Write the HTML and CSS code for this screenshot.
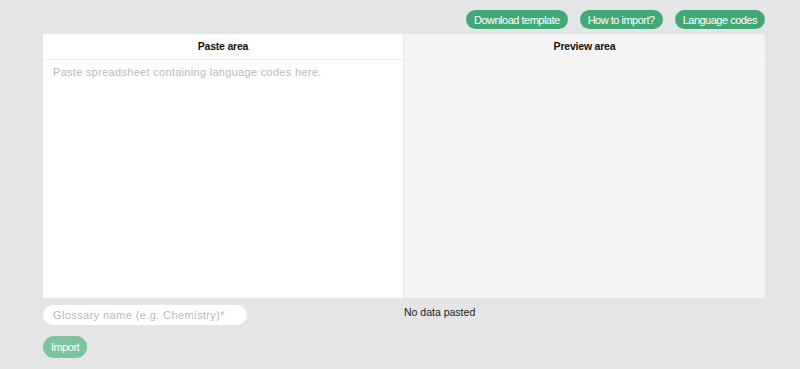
FILE: index.html
```html
<!DOCTYPE html>
<html lang="en">
<head>
  <meta charset="UTF-8" />
  <title>Import glossary</title>
  <link rel="stylesheet" href="styles.css">
</head>
<body>
  <div class="page">
    <div class="toolbar">
      <button class="pill">Download template</button>
      <button class="pill">How to import?</button>
      <button class="pill">Language codes</button>
    </div>

    <div class="grid">
      <div class="col paste">
        <div class="col-head">Paste area</div>
        <div class="col-body">
          <textarea placeholder="Paste spreadsheet containing language codes here."></textarea>
        </div>
      </div>
      <div class="col preview">
        <div class="col-head">Preview area</div>
        <div class="col-body"></div>
      </div>
    </div>

    <div class="bottom">
      <div class="form">
        <input type="text" class="name" placeholder="Glossary name (e.g. Chemistry)*">
        <button class="pill import">Import</button>
      </div>
      <div class="status">No data pasted</div>
    </div>
  </div>
</body>
</html>
```

FILE: styles.css
```css
* {
  margin: 0;
  padding: 0;
  box-sizing: border-box;
}

html, body {
  height: 100%;
  background: #e4e5e7;
  font-family: 'Liberation Sans', Arial, sans-serif;
  color: #111;
}

.page {
  width: 722px;
  margin-left: 43px;
  padding-top: 10px;
}

.toolbar {
  display: flex;
  justify-content: flex-end;
  gap: 12px;
  height: 24px;
}

.pill {
  height: 19px;
  padding: 0 8px;
  border: none;
  border-radius: 10px;
  background: #43a974;
  color: #fff;
  font-family: 'Liberation Sans', Arial, sans-serif;
  font-size: 11px;
  letter-spacing: -0.5px;
  cursor: pointer;
}

.grid {
  display: flex;
  height: 264px;
}

.col {
  display: flex;
  flex-direction: column;
}

.paste {
  width: 360px;
  background: #fff;
}

.preview {
  flex: 1;
  background: #f4f4f4;
  border-left: 1px solid #ececec;
}

.col-head {
  height: 26px;
  line-height: 25px;
  text-align: center;
  font-size: 10.5px;
  font-weight: bold;
  letter-spacing: -0.2px;
  border-bottom: 1px solid #efefef;
}

.col-body {
  flex: 1;
}

textarea {
  width: 100%;
  height: 100%;
  border: none;
  outline: none;
  resize: none;
  background: transparent;
  padding: 6px 10px;
  font-family: 'Liberation Sans', Arial, sans-serif;
  font-size: 11px;
  letter-spacing: 0.3px;
}

textarea::placeholder,
.name::placeholder {
  color: #b9b9b9;
}

.bottom {
  display: flex;
  padding-top: 7px;
}

.form {
  width: 361px;
  display: flex;
  flex-direction: column;
  align-items: flex-start;
  gap: 11px;
}

.name {
  width: 204px;
  height: 20px;
  border: none;
  outline: none;
  border-radius: 10px;
  background: #fff;
  padding: 0 10px;
  font-family: 'Liberation Sans', Arial, sans-serif;
  font-size: 11px;
  letter-spacing: 0.4px;
}

.import {
  height: 22px;
  padding: 0 8px;
  border-radius: 11px;
  background: #7dc39e;
}

.status {
  font-size: 10.5px;
  padding-top: 1px;
  color: #222;
}
```
